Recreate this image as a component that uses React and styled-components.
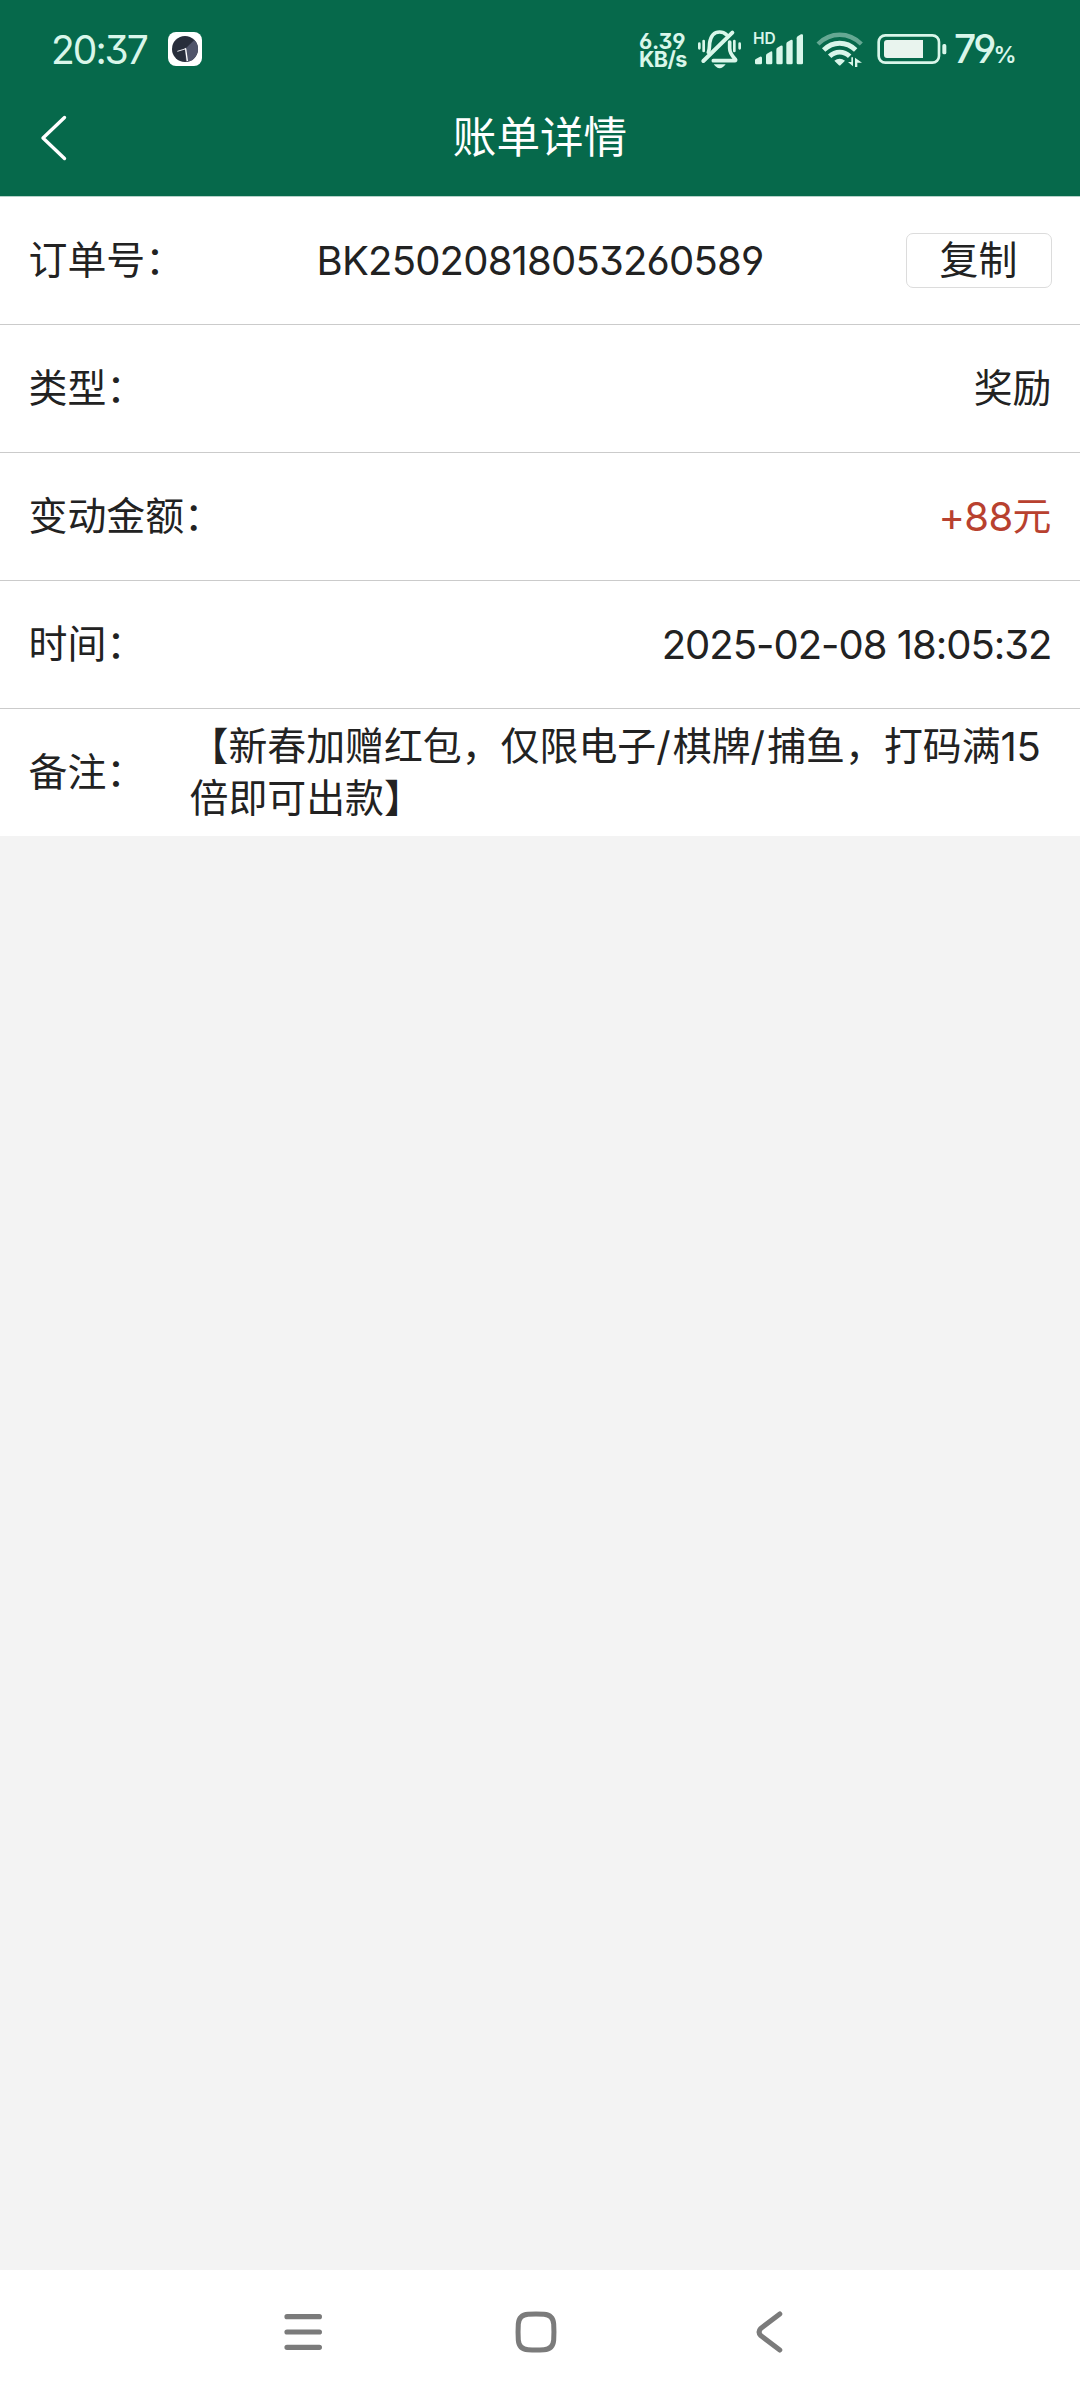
import React from "react";
import styled, { createGlobalStyle } from "styled-components";

const GlobalStyle = createGlobalStyle`
  * { box-sizing: border-box; }
  html, body { margin: 0; padding: 0; }
  body {
    background: #f3f3f3;
    font-family: Inter, "Noto Sans CJK SC", sans-serif;
    font-feature-settings: "cv03", "cv04", "cv09";
  }
`;

const Screen = styled.div`
  width: 1080px;
  height: 2400px;
  display: flex;
  flex-direction: column;
  background: #f3f3f3;
  overflow: hidden;
`;

const Header = styled.header`
  flex: none;
  height: 196px;
  background: #06694b;
  color: #fff;
`;

const StatusBar = styled.div`
  height: 80px;
  padding: 18px 63px 0 51px;
  display: flex;
  align-items: center;
  justify-content: space-between;
  color: #d9f6ea;
`;

const StatusGroup = styled.div`
  display: flex;
  align-items: center;
`;

const Clock = styled.span`
  width: 117px;
  font-size: 39px;
  line-height: 40px;
  letter-spacing: -2px;
  padding-top: 1px;
`;

const Speed = styled.div`
  width: 58px;
  padding-top: 2px;
  display: flex;
  flex-direction: column;
  font-size: 21.5px;
  font-weight: 700;
  line-height: 18px;
  white-space: nowrap;
`;

const SpeedLine = styled.span`
  letter-spacing: ${(p) => p.$spacing};
`;

const Icon = styled.svg`
  display: block;
  flex: none;
  margin-right: ${(p) => p.$gap || 0}px;
`;

const Signal = styled.div`
  position: relative;
  margin-right: 12px;
`;

const HdBadge = styled.span`
  position: absolute;
  left: -1px;
  top: 1px;
  font-size: 15.5px;
  font-weight: 600;
  line-height: 12px;
`;

const Percent = styled.span`
  display: flex;
  align-items: baseline;
  width: 63px;
  padding-top: 5px;
  font-size: 39px;
  line-height: 40px;
  font-weight: 500;
  letter-spacing: -3px;
`;

const PercentSign = styled.small`
  font-size: 23px;
  font-weight: 600;
  letter-spacing: 0;
`;

const TitleBar = styled.div`
  height: 116px;
  display: grid;
  grid-template-columns: 100px 1fr 100px;
  align-items: center;
`;

const BackButton = styled.button`
  width: 100px;
  height: 100px;
  padding: 0 0 0 39px;
  border: 0;
  background: none;
  color: inherit;
`;

const Title = styled.h1`
  margin: 0;
  text-align: center;
  font-size: 43.6px;
  font-weight: 400;
  line-height: 60px;
`;

const List = styled.main`
  flex: none;
  background: #fff;
  border-top: 1px solid #b4d2c9;
`;

const Row = styled.section`
  height: 128px;
  padding: 0 28.5px 1px 28.5px;
  display: grid;
  grid-template-columns: ${(p) => p.$columns || "auto 1fr"};
  align-items: center;
  font-size: 38.9px;
  line-height: 52px;
  color: #222;
  &:first-child { height: 127px; }
  & + & { border-top: 1px solid #cbcbcb; }
`;

const Label = styled.span`
  white-space: nowrap;
`;

const Value = styled.span`
  white-space: nowrap;
  text-align: ${(p) => p.$align || "right"};
  color: ${(p) => p.$color || "inherit"};
`;

const Latin = styled.span`
  font-size: 40px;
  line-height: 40px;
  vertical-align: -1px;
  letter-spacing: ${(p) => p.$spacing || 0};
`;

const CopyButton = styled.button`
  justify-self: end;
  width: 146px;
  height: 55px;
  padding: 0;
  border: 1px solid #dcdcdc;
  border-radius: 7px;
  background: #fff;
  color: #222;
  font: inherit;
  line-height: 52px;
`;

const NavBar = styled.nav`
  flex: none;
  height: 130px;
  margin-top: auto;
  padding: 0 8px 7px 0;
  display: grid;
  grid-template-columns: repeat(3, 233px);
  justify-content: center;
  align-items: center;
  justify-items: center;
  background: #fff;
`;

const ClockAppIcon = () => (
  <Icon width="34" height="34" viewBox="0 0 102 102">
    <rect width="102" height="102" rx="24" fill="#fff" />
    <circle cx="51" cy="51" r="39" fill="#282d3b" />
    <path d="M51 51 L79 24 A39 39 0 0 1 54 90 Z" fill="#50546a" />
    <path d="M51 51 L28 58" stroke="#e8e8ee" strokeWidth="3" />
    <path d="M51 49 L53 51 L58 87" stroke="#fff" strokeWidth="4" fill="none" />
  </Icon>
);

const MutedBellIcon = () => (
  <Icon $gap={12} width="45" height="40" viewBox="229 59 135 120" fill="none" stroke="currentColor" strokeLinecap="round" strokeLinejoin="round">
    <path d="M236 103V117M249 95V125M341 95V125M357 103V117" strokeWidth="8" />
    <path d="M263 129C267 121 266 112 267 101C270 80 280 68 297 68C306 68 312 71 317 76" strokeWidth="11" />
    <path d="M335 70L248 155" strokeWidth="12" />
    <path d="M327 98V117C327 131 334 140 344 150C346 153 345 154 342 154H278" strokeWidth="11" />
    <path d="M279 165H315C310 172 304 177 297 177S284 172 279 165Z" fill="currentColor" stroke="none" />
  </Icon>
);

const SignalIcon = () => (
  <Icon width="50" height="34" viewBox="402 67 150 102" fill="currentColor">
    <path d="M405 160V151Q406 148 409 147L420 141Q426 139 426 145V160Q426 164 422 164H409Q405 164 405 160Z" />
    <path d="M438 160V138Q438 134 441 132L451 126Q457 123 457 129V160Q457 164 453 164H442Q438 164 438 160Z" />
    <path d="M469 160V120Q469 116 472 114L482 108Q488 106 488 111V160Q488 164 484 164H473Q469 164 469 160Z" />
    <path d="M499 160V103Q499 99 502 97L512 91Q518 88 518 94V160Q518 164 514 164H503Q499 164 499 160Z" />
    <path d="M530 160V86Q530 82 533 80L543 74Q549 72 549 77V160Q549 164 545 164H534Q530 164 530 160Z" />
  </Icon>
);

const WifiIcon = () => (
  <Icon $gap={14} width="47" height="36" viewBox="586 64 141 108" fill="none" stroke="currentColor" strokeWidth="14.5">
    <path d="M592 103C630 66 684 66 722 103" strokeWidth="13" opacity=".45" />
    <path d="M609 121C637 94 677 94 705 121" />
    <path d="M627 140C644 123 670 123 687 140" />
    <path d="M641 153C651 145 663 145 673 153L660 166Q657 169 654 166Z" fill="currentColor" stroke="none" />
    <path d="M697 143V170L682 157H692V143ZM703 172V144L724 159H710V172Z" fill="currentColor" stroke="none" />
  </Icon>
);

const BatteryIcon = () => (
  <Icon $gap={7} width="70" height="32" viewBox="110 69 210 96">
    <rect x="115" y="76" width="181" height="82" rx="20" fill="none" stroke="currentColor" strokeWidth="8" />
    <path d="M140 90H248V144H140Q131 144 131 135V99Q131 90 140 90Z" fill="#e9f4ee" />
    <rect x="306" y="102" width="12" height="31" rx="5" fill="currentColor" />
  </Icon>
);

const ChevronIcon = () => (
  <Icon width="30" height="48" viewBox="0 0 30 48" fill="none" stroke="currentColor" strokeWidth="3.4" strokeLinecap="round" strokeLinejoin="round">
    <path d="M25.5 3.5L4 24L25.5 44.5" />
  </Icon>
);

const MenuIcon = () => (
  <Icon width="40" height="42" viewBox="0 0 40 42" stroke="#7b7b7b" strokeWidth="5.2" strokeLinecap="round">
    <path d="M4 5.7H36.4M4 21H36.4M4 36.3H36.4" />
  </Icon>
);

const HomeIcon = () => (
  <Icon width="42" height="42" viewBox="0 0 42 42" fill="none" stroke="#7b7b7b" strokeWidth="5">
    <path d="M13 3.2Q21 2.7 29 3.2Q38 3.8 38.7 13Q39.2 21 38.7 29Q38 38.2 29 38.8Q21 39.3 13 38.8Q4 38.2 3.3 29Q2.8 21 3.3 13Q4 3.8 13 3.2Z" />
  </Icon>
);

const NavBackIcon = () => (
  <Icon width="28" height="42" viewBox="0 0 28 42" fill="none" stroke="#7b7b7b" strokeWidth="5" strokeLinecap="round" strokeLinejoin="round">
    <path d="M24.8 3L5.7 17.5Q2.5 21 5.7 24.5L24.8 39" />
  </Icon>
);

export default function App() {
  return (
    <>
      <GlobalStyle />
      <Screen>
        <Header>
          <StatusBar>
            <StatusGroup>
              <Clock>20:37</Clock>
              <ClockAppIcon />
            </StatusGroup>
            <StatusGroup>
              <Speed>
                <SpeedLine $spacing="-0.2px">6.39</SpeedLine>
                <SpeedLine $spacing="-0.6px">KB/s</SpeedLine>
              </Speed>
              <MutedBellIcon />
              <Signal>
                <HdBadge>HD</HdBadge>
                <SignalIcon />
              </Signal>
              <WifiIcon />
              <BatteryIcon />
              <Percent>79<PercentSign>%</PercentSign></Percent>
            </StatusGroup>
          </StatusBar>
          <TitleBar>
            <BackButton aria-label="返回"><ChevronIcon /></BackButton>
            <Title>账单详情</Title>
          </TitleBar>
        </Header>
        <List>
          <Row $columns="200px 1fr 200px">
            <Label>订单号：</Label>
            <Value $align="center"><Latin $spacing="-0.8px">BK25020818053260589</Latin></Value>
            <CopyButton>复制</CopyButton>
          </Row>
          <Row>
            <Label>类型：</Label>
            <Value>奖励</Value>
          </Row>
          <Row>
            <Label>变动金额：</Label>
            <Value $color="#b8412f"><Latin $spacing="-0.6px">+88</Latin>元</Value>
          </Row>
          <Row>
            <Label>时间：</Label>
            <Value><Latin $spacing="-1px">2025-02-08 18:05:32</Latin></Value>
          </Row>
          <Row $columns="161px 1fr">
            <Label>备注：</Label>
            <Value $align="left">
              【新春加赠红包，仅限电子<Latin $spacing="2.2px">/</Latin>棋牌<Latin $spacing="2.2px">/</Latin>捕鱼，打码满<Latin $spacing="-0.4px">15</Latin>
              <br />
              倍即可出款】
            </Value>
          </Row>
        </List>
        <NavBar>
          <MenuIcon />
          <HomeIcon />
          <NavBackIcon />
        </NavBar>
      </Screen>
    </>
  );
}
